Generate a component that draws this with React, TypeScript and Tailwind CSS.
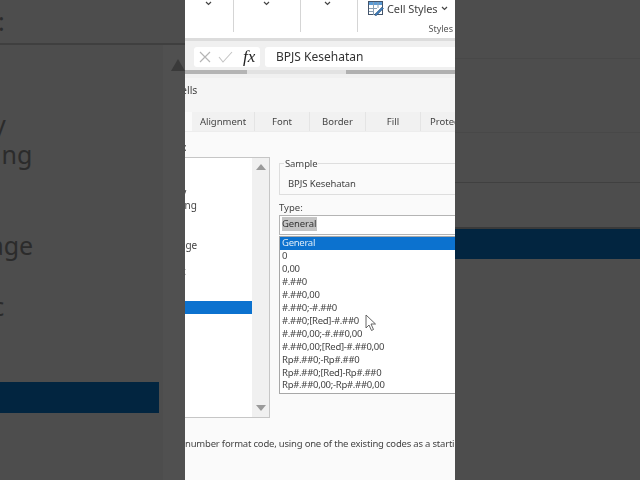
const categories = ["General", "Number", "Currency", "Accounting", "Date", "Time", "Percentage", "Fraction", "Scientific", "Text", "Special", "Custom"];

const formats = [
  "General",
  "0",
  "0,00",
  "#.##0",
  "#.##0,00",
  "#.##0;-#.##0",
  "#.##0;[Red]-#.##0",
  "#.##0,00;-#.##0,00",
  "#.##0,00;[Red]-#.##0,00",
  "Rp#.##0;-Rp#.##0",
  "Rp#.##0;[Red]-Rp#.##0",
  "Rp#.##0,00;-Rp#.##0,00",
];

const tabs = [
  { label: "Alignment", width: "w-[63px]" },
  { label: "Font", width: "w-[55px]" },
  { label: "Border", width: "w-[56px]" },
  { label: "Fill", width: "w-[55px]" },
];

function Chevron({ className }: { className?: string }) {
  return (
    <svg width="7" height="5" viewBox="0 0 7 5" className={className}>
      <path d="M1 1l2.5 2.5L6 1" fill="none" stroke="#444" strokeWidth="1.2" />
    </svg>
  );
}

function Triangle({ down, color, className = "h-[6px] w-[10px]" }: { down?: boolean; color: string; className?: string }) {
  return (
    <svg viewBox="0 0 10 6" preserveAspectRatio="none" className={className}>
      <path d={down ? "M0 0h10L5 6z" : "M0 6h10L5 0z"} fill={color} />
    </svg>
  );
}

function LeftBackdrop() {
  return (
    <div className="flex h-[480px] w-[185px] shrink-0 flex-col overflow-hidden bg-[#4d4d4d] text-[25px] text-[#2b2b2b]">
      <div className="h-[45px] shrink-0 border-b-2 border-[#3f3f3f] pl-0 leading-[42px]">
        <span className="-ml-[2px] block">:</span>
      </div>
      <div className="flex flex-1">
        <div className="w-[163px] overflow-hidden pt-[3px]">
          {categories.map((name) => (
            <div
              key={name}
              className={`h-[30.4px] w-[159px] whitespace-nowrap leading-[30px] ${name === "Custom" ? "bg-[#022540]" : ""}`}
            >
              {name !== "Custom" && <span className="-ml-[100px] block">{name}</span>}
            </div>
          ))}
        </div>
        <div className="flex w-[22px] justify-end bg-[#505050] pt-[14px]">
          <Triangle color="#3a3a3a" className="h-[12px] w-[14px]" />
        </div>
      </div>
    </div>
  );
}

function RightBackdrop() {
  return (
    <div className="flex h-[480px] w-[185px] shrink-0 flex-col bg-[#4d4d4d]">
      <div className="h-[59px] border-b border-[#484848]" />
      <div className="h-[74px] border-b border-[#484848]" />
      <div className="h-[50px] border-b border-[#404040]" />
      <div className="h-[46px] border-b-2 border-[#3a3a3a]" />
      <div className="h-[30px] bg-[#022540]" />
    </div>
  );
}

function Ribbon() {
  return (
    <div className="flex h-[38px] shrink-0 bg-white">
      <div className="flex h-[32px] w-[49px] justify-center border-r border-[#d5d5d5] pr-[2px] pt-[1px]">
        <Chevron />
      </div>
      <div className="flex h-[32px] w-[67px] justify-center border-r border-[#d5d5d5] pr-[2px] pt-[1px]">
        <Chevron />
      </div>
      <div className="flex h-[32px] w-[57px] justify-center border-r border-[#d5d5d5] pr-[3px] pt-[1px]">
        <Chevron />
      </div>
      <div className="flex flex-1 flex-col pl-[10px] pt-[1px]">
        <div className="flex items-center">
          <svg width="16" height="15" viewBox="0 0 16 15">
            <rect x="0.5" y="0.5" width="14" height="13" fill="#fff" stroke="#44546a" />
            <rect x="1" y="1" width="13" height="3" fill="#5b9bd5" />
            <path d="M5.5 1v13M10 1v6M1 7.5h8M1 10.5h5" stroke="#8aa0b5" />
            <path d="M7 13l7-7 1.5 1.5-7 7H7z" fill="#3d7ab8" stroke="#2f4f6f" strokeWidth="0.5" />
          </svg>
          <span className="ml-[3px] text-[11px] leading-[15px] tracking-[-0.1px] text-[#444]">Cell Styles</span>
          <Chevron className="ml-[3px]" />
        </div>
        <div className="mt-[6px] pr-[2px] text-right text-[9px] leading-[13px] text-[#555]">Styles</div>
      </div>
    </div>
  );
}

function FormulaBar() {
  return (
    <div className="flex h-[40px] shrink-0 flex-col border-t-[3px] border-[#dcdcdc] bg-[#f0f0f0]">
      <div className="flex h-[29px] items-center pl-[9px] pt-[3px]">
        <div className="flex h-[20px] w-[66px] items-center gap-[7px] rounded-[3px] bg-white pl-[5px]">
          <svg width="12" height="12" viewBox="0 0 12 12">
            <path d="M1 1l10 10M11 1L1 11" stroke="#b5b5b5" strokeWidth="1.2" />
          </svg>
          <svg width="15" height="12" viewBox="0 0 15 12">
            <path d="M1 6l4 5L14 1" fill="none" stroke="#c4c4c4" strokeWidth="1.1" />
          </svg>
          <span className="ml-[3px] font-['Liberation_Serif'] text-[17px] italic leading-[20px] text-[#222]">fx</span>
        </div>
        <div className="ml-[5px] h-[20px] flex-1 rounded-l-[3px] bg-white pl-[11px] text-[12px] leading-[20px] text-[#333]">
          BPJS Kesehatan
        </div>
      </div>
      <div className="flex h-[5px]">
        <div className="h-[4px] w-[62px] bg-[#b4b4b4]" />
        <div className="h-[4px] w-[99px] bg-[#e2e2e2]" />
        <div className="h-[4px] flex-1 bg-[#b0b0b0]" />
      </div>
    </div>
  );
}

function Tabs() {
  return (
    <div className="flex h-[20px] shrink-0 border-b border-[#ededed] bg-[#f1f1f1] text-[9.5px] leading-[20px] text-[#444]">
      <div className="w-[7px] shrink-0 bg-[#fafafa]" />
      {tabs.map((tab) => (
        <div key={tab.label} className={`${tab.width} shrink-0 border-r border-[#e4e4e4] text-center`}>
          {tab.label}
        </div>
      ))}
      <div className="shrink-0 whitespace-nowrap pl-[9px]">Protection</div>
    </div>
  );
}

function CategoryList() {
  return (
    <div className="flex h-[261px] w-[85px] shrink-0 overflow-hidden border-y border-r border-[#c6c6c6] bg-white">
      <div className="w-[67px] overflow-hidden pt-[2px] text-[10px] leading-[13px] text-[#444]">
        {categories.map((name) => (
          <div
            key={name}
            className={`whitespace-nowrap ${name === "Custom" ? "-mt-[3px] h-[13px] bg-[#0c72cf]" : "h-[13.1px]"}`}
          >
            {name !== "Custom" && <span className="-ml-[41px] block">{name}</span>}
          </div>
        ))}
      </div>
      <div className="flex w-[17px] flex-col items-center justify-between bg-[#f0f0f0] py-[6px]">
        <Triangle color="#9a9a9a" />
        <Triangle down color="#9a9a9a" />
      </div>
    </div>
  );
}

function FormatPane() {
  return (
    <div className="ml-[9px] flex-1 overflow-hidden pt-[6px]">
      <div className="relative h-[32px] border-y border-l border-[#dedede] pl-[8px] pt-[13px] text-[9.5px] leading-[13px] tracking-[-0.1px] text-[#444]">
        BPJS Kesehatan
        <span className="absolute -top-[6px] left-[4px] bg-[#fafafa] px-[1px] leading-[11px]">Sample</span>
      </div>
      <div className="mt-[6px] text-[9.5px] leading-[13px] text-[#444]">Type:</div>
      <div className="mt-[1px] h-[20px] border border-r-0 border-[#b4b4b4] bg-white pl-[2px] pt-[1px] text-[9.5px] leading-[14px] tracking-[-0.1px] text-[#333]">
        <span className="inline-block bg-[#c4c4c4] pr-[1px]">General</span>
      </div>
      <div className="mt-[1px] h-[158px] overflow-hidden border border-r-0 border-[#a8a8a8] bg-white text-[9.5px] leading-[12.95px] tracking-[-0.28px] text-[#444]">
        {formats.map((format, i) => (
          <div key={format} className={`whitespace-nowrap pl-[2px] ${i === 0 ? "bg-[#0c72cf] text-[#dcebf8]" : ""}`}>
            {format}
          </div>
        ))}
      </div>
    </div>
  );
}

function Cursor() {
  return (
    <svg width="12" height="18" viewBox="0 0 12 18" className="absolute left-[180px] top-[314px]">
      <path d="M1 1v13l3-3 2.5 5.5 2-1L6 10h4.5z" fill="#fff" stroke="#555" strokeWidth="0.9" />
    </svg>
  );
}

export default function App() {
  return (
    <div className="flex h-[480px] w-[640px] overflow-hidden font-['Noto_Sans',sans-serif]">
      <LeftBackdrop />
      <div className="relative flex w-[270px] shrink-0 flex-col overflow-hidden bg-[#fafafa] blur-[0.3px]">
        <Ribbon />
        <FormulaBar />
        <div className="h-[34px] shrink-0 bg-[#f5f5f5] pt-[5px] text-[10.5px] leading-[14px] text-[#444]">
          <span className="-ml-[49px] block whitespace-nowrap">Format Cells</span>
        </div>
        <Tabs />
        <div className="h-[25px] shrink-0 pt-[9px] text-[10px] leading-[13px] text-[#444]">
          <span className="-ml-[1px] block">:</span>
        </div>
        <div className="flex">
          <CategoryList />
          <FormatPane />
        </div>
        <div className="mt-[19px] whitespace-nowrap text-[9.5px] leading-[13px] tracking-[-0.2px] text-[#444]">
          number format code, using one of the existing codes as a starting point.
        </div>
        <Cursor />
      </div>
      <RightBackdrop />
    </div>
  );
}
